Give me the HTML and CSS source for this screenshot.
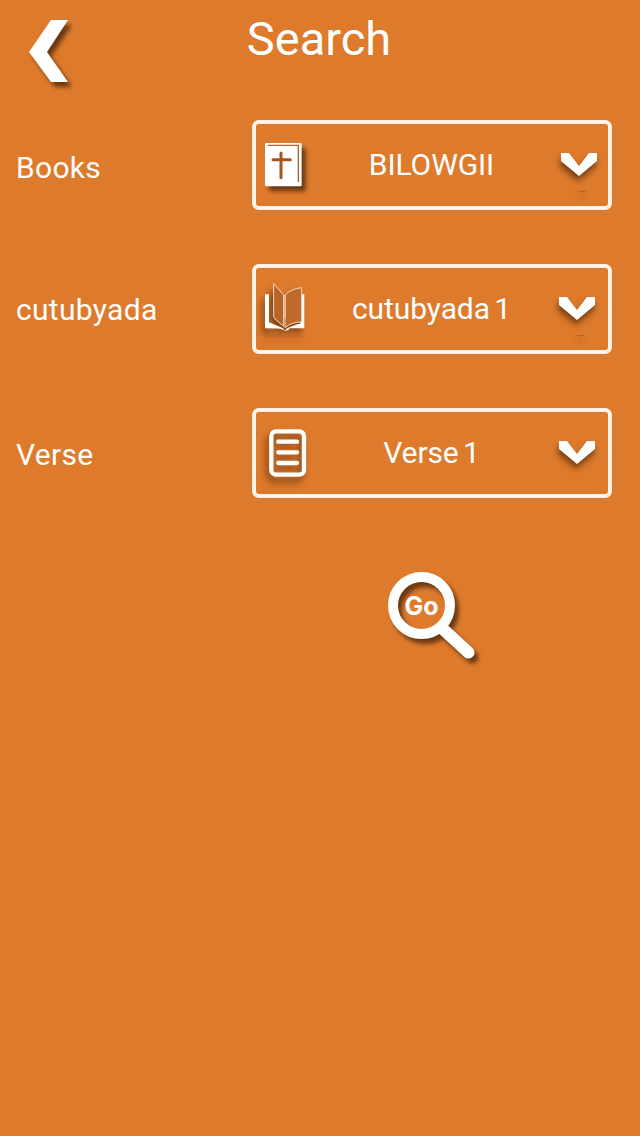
FILE: index.html
```html
<!DOCTYPE html>
<html lang="en">
<head>
<meta charset="utf-8">
<title>Search</title>
<link rel="stylesheet" href="styles.css">
</head>
<body>
<main class="page">
  <header class="top">
    <a class="back" href="#" aria-label="Back">
      <svg class="shadow" width="48" height="72" viewBox="0 0 48 72"><polygon fill="#fff" points="22,0 39,0 18,32 39,62 22,62 0,32"/></svg>
    </a>
    <h1 class="title">Search</h1>
  </header>

  <section class="form">
    <div class="row">
      <label class="label label-books">Books</label>
      <div class="select">
        <svg class="icon icon-bible shadow" width="44" height="52" viewBox="0 0 132 156">
          <rect x="0" y="0" width="110" height="130" rx="4" fill="#fff"/>
          <path d="M8 7H100V117" fill="none" stroke="#b5622a" stroke-width="4"/>
          <path d="M48 30V104M24 50H76" fill="none" stroke="#a4561f" stroke-width="9" stroke-linecap="round"/>
        </svg>
        <span class="value">BILOWGII</span>
        <svg class="chevron chevron-first shadow-soft" width="40" height="44" viewBox="0 0 40 44">
          <polygon fill="#fff" points="0,0 8,0 18,13 28,0 36,0 36,8 18,23 0,8"/>
          <rect x="18" y="38" width="7" height="1" fill="#b5622a"/>
        </svg>
      </div>
    </div>

    <div class="row">
      <label class="label">cutubyada</label>
      <div class="select">
        <svg class="icon icon-book shadow-left" width="44" height="56" viewBox="0 0 132 168">
          <path fill="#fff" d="M0 34H12V118L54 136L60 144L66 136Q90 124 106 122V34H118V136H74Q66 150 54 140Q48 136 0 136Z"/>
          <path fill="#b8652a" stroke="#f6d9c0" stroke-width="3" d="M26 2L56 36V130L30 108Q26 104 26 96Z"/>
          <path fill="#bf6a2b" stroke="#f6d9c0" stroke-width="3" d="M60 36Q76 18 110 14V116Q80 118 60 134Z"/>
          <path d="M60 36V106" stroke="#f6d9c0" stroke-width="3" fill="none"/>
          <rect x="0" y="158" width="118" height="2" fill="#b5622a"/>
        </svg>
        <span class="value">cutubyada 1</span>
        <svg class="chevron shadow-soft" width="40" height="44" viewBox="0 0 40 44">
          <polygon fill="#fff" points="0,0 8,0 18,13 28,0 36,0 36,8 18,23 0,8"/>
          <rect x="18" y="38" width="7" height="1" fill="#b5622a"/>
        </svg>
      </div>
    </div>

    <div class="row">
      <label class="label label-verse">Verse</label>
      <div class="select">
        <svg class="icon icon-doc shadow-left" width="44" height="52" viewBox="0 0 132 156">
          <rect x="7" y="7" width="98" height="130" rx="14" fill="none" stroke="#fff" stroke-width="13"/>
          <path d="M28 38H84M28 70H84M28 102H84" stroke="#fff" stroke-width="13" stroke-linecap="round" fill="none"/>
          <rect x="0" y="156" width="100" height="2" fill="#b5622a"/>
        </svg>
        <span class="value">Verse 1</span>
        <svg class="chevron shadow-soft" width="40" height="44" viewBox="0 0 40 44">
          <polygon fill="#fff" points="0,0 8,0 18,13 28,0 36,0 36,8 18,23 0,8"/>
        </svg>
      </div>
    </div>
  </section>

  <div class="actions">
    <a class="go" href="#" aria-label="Go">
      <svg class="go-icon" width="92" height="94" viewBox="0 0 92 94">
        <g class="shadow">
          <circle cx="33.500" cy="33.500" r="28.500" fill="none" stroke="#fff" stroke-width="10"/>
          <line x1="56" y1="58" x2="80.500" y2="80.500" stroke="#fff" stroke-width="12" stroke-linecap="round"/>
        </g>
        <text class="go-text" x="33.500" y="43" text-anchor="middle">Go</text>
      </svg>
    </a>
  </div>
</main>
</body>
</html>
```

FILE: styles.css
```css
* {
  box-sizing: border-box;
}

html,
body {
  margin: 0;
  height: 100%;
}

body {
  background: #de7a2c;
  color: #fff;
  font-family: Roboto, "Liberation Sans", sans-serif;
}

.page {
  width: 640px;
  height: 1136px;
  overflow: hidden;
  padding: 0 28px 0 16px;
}

.top {
  display: grid;
  grid-template-columns: 1fr auto 1fr;
  height: 120px;
  padding-top: 20px;
}

.back {
  display: block;
  margin-left: 13px;
  line-height: 0;
}

.title {
  margin: -9px 0 0 10px;
  font-size: 47px;
  line-height: 56px;
  font-weight: 400;
  align-self: start;
}

.form {
  display: flex;
  flex-direction: column;
  gap: 54px;
}

.row {
  display: flex;
  align-items: center;
  justify-content: space-between;
}

.label {
  font-size: 30px;
  line-height: 36px;
  letter-spacing: 0.3px;
  margin-top: 2px;
}

.label-books {
  margin-top: 5px;
}

.label-verse {
  margin-top: 3px;
}

.select {
  display: grid;
  grid-template-columns: 1fr auto 1fr;
  align-items: center;
  width: 360px;
  height: 90px;
  padding: 0 10px 0 9px;
  border: 4px solid #fdf3ea;
  border-radius: 7px;
}

.icon {
  justify-self: start;
}

.icon-bible {
  margin-top: 8px;
}

.icon-book {
  margin-top: 4px;
}

.icon-doc {
  margin: 4px 0 0 4px;
}

.value {
  font-size: 30px;
  line-height: 36px;
  letter-spacing: -0.1px;
  word-spacing: -3px;
  white-space: nowrap;
}

.chevron {
  justify-self: end;
  margin: 20px -1px 0 0;
}

.chevron-first {
  margin-right: -3px;
}

.shadow {
  overflow: visible;
  filter: drop-shadow(4px 5px 2px rgba(70, 35, 10, 0.75));
}

.shadow-left {
  overflow: visible;
  filter: drop-shadow(-3px 5px 3px rgba(70, 35, 10, 0.65));
}

.shadow-soft {
  overflow: visible;
  filter: drop-shadow(-1px 5px 3px rgba(70, 35, 10, 0.7));
}

.actions {
  display: flex;
  margin-top: 74px;
  padding-left: 372px;
}

.go {
  display: block;
  line-height: 0;
}

.go-icon {
  overflow: visible;
}

.go-text {
  fill: #fff;
  font-family: Inter, Roboto, sans-serif;
  font-size: 25px;
  font-weight: 700;
}
```
